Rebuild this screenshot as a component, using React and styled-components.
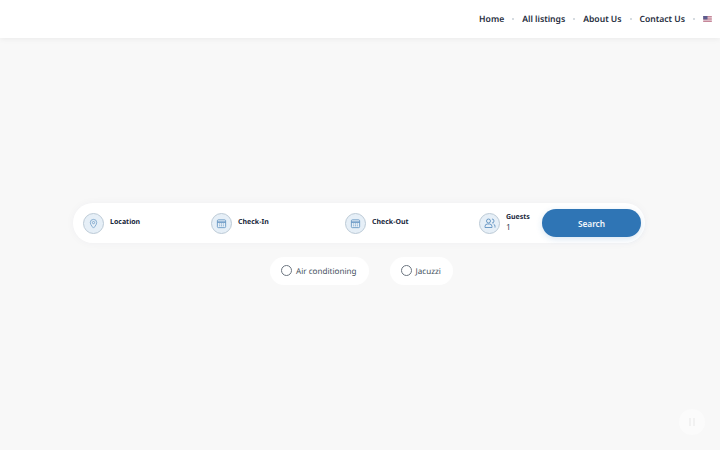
import React from 'react'
import styled, { createGlobalStyle } from 'styled-components'

const GlobalStyle = createGlobalStyle`
  html, body {
    margin: 0;
    height: 100%;
    background: #f8f8f8;
    font-family: "Noto Sans", sans-serif;
    color: #1c2b3a;
    text-rendering: geometricPrecision;
  }
  #root { height: 100%; }
  * { box-sizing: border-box; }
`

const Page = styled.div`
  width: 720px;
  height: 450px;
  overflow: hidden;
  display: flex;
  flex-direction: column;
`

const Header = styled.header`
  height: 38px;
  flex: none;
  padding: 0 8px 1px 0;
  background: #fff;
  box-shadow: 0 1px 6px rgba(0, 0, 0, 0.06);
  display: flex;
  align-items: center;
  justify-content: flex-end;
`

const NavLink = styled.a`
  font-size: 8.6px;
  font-weight: 600;
  color: #1f2d3d;
  white-space: nowrap;
`

const Dot = styled.span`
  width: 2px;
  height: 2px;
  margin: 0 8px;
  border-radius: 50%;
  background: #c9d0d7;
`

const Main = styled.main`
  padding: 165px 0 0 73px;
`

const SearchBar = styled.div`
  width: 572px;
  height: 40px;
  padding: 0 4px 0 10px;
  background: #fff;
  border-radius: 20px;
  box-shadow: 0 0 8px rgba(40, 60, 90, 0.04);
  display: flex;
  align-items: center;
`

const Field = styled.div`
  width: ${(p) => p.$width}px;
  flex: none;
  display: flex;
  align-items: center;
  gap: 6px;
`

const IconCircle = styled.span`
  width: 21px;
  height: 21px;
  flex: none;
  border-radius: 50%;
  background: #e6eff7;
  border: 1px solid #bccad6;
  color: #3f7cb4;
  display: flex;
  align-items: center;
  justify-content: center;
`

const FieldText = styled.div`
  display: flex;
  flex-direction: column;
  line-height: 10px;
`

const FieldLabel = styled.span`
  font-size: 7px;
  font-weight: 700;
  color: #17263a;
`

const FieldValue = styled.span`
  font-size: 8.5px;
  color: #3c4a58;
`

const SearchButton = styled.button`
  width: 99px;
  height: 28px;
  flex: none;
  margin-left: auto;
  border: none;
  border-radius: 14px;
  background: #2f75b5;
  color: #f2f7fb;
  font: 600 8.3px "Noto Sans", sans-serif;
  box-shadow: 0 2px 6px rgba(47, 117, 181, 0.18);
`

const Amenities = styled.div`
  margin: 14px 0 0 197px;
  display: flex;
  gap: 21px;
`

const Amenity = styled.label`
  height: 28px;
  padding: 0 12px 0 11px;
  background: #fff;
  border-radius: 14px;
  display: flex;
  align-items: center;
  gap: 4px;
  font-size: 8.1px;
  color: #465361;
`

const Radio = styled.span`
  width: 11px;
  height: 11px;
  margin-top: -1px;
  border-radius: 50%;
  border: 1px solid #6b7580;
  background: #fff;
`

const FloatingButton = styled.button`
  position: fixed;
  right: 15px;
  bottom: 15px;
  width: 26px;
  height: 26px;
  padding: 0;
  border: none;
  border-radius: 50%;
  background: #fbfbfb;
  display: flex;
  align-items: center;
  justify-content: center;
  gap: 2px;
`

const Bar = styled.span`
  width: 2px;
  height: 8px;
  background: #f1f1f1;
`

const FlagSlot = styled.span`
  display: flex;
`

const Flag = () => (
  <svg width="9" height="6" viewBox="0 0 10 7">
    <rect width="10" height="7" fill="#e9d5dc" />
    <rect width="10" height="1" fill="#c07a8e" />
    <rect y="2" width="10" height="1" fill="#c07a8e" />
    <rect y="4" width="10" height="1" fill="#c07a8e" />
    <rect y="6" width="10" height="1" fill="#c07a8e" />
    <rect width="5" height="4" fill="#5c5c8e" />
  </svg>
)

const PinIcon = () => (
  <svg width="11" height="11" viewBox="0 0 24 24" fill="none" stroke="currentColor" strokeWidth="1.6" opacity="0.75">
    <path d="M12 22s7-7 7-12a7 7 0 1 0-14 0c0 5 7 12 7 12z" />
    <circle cx="12" cy="10" r="2.5" />
  </svg>
)

const CalendarIcon = () => (
  <svg width="11" height="11" viewBox="0 0 24 24" fill="none" stroke="currentColor" strokeWidth="1.8" opacity="0.8">
    <rect x="3" y="4" width="18" height="17" rx="2" />
    <path d="M3 9h18" strokeWidth="3" />
    <path d="M7 13h2M11 13h2M15 13h2M7 17h2M11 17h2M15 17h2" />
  </svg>
)

const GuestsIcon = () => (
  <svg width="12" height="12" viewBox="0 0 24 24" fill="none" stroke="currentColor" strokeWidth="1.8" opacity="0.8">
    <circle cx="9" cy="8" r="4" />
    <path d="M2 21v-2a5 5 0 0 1 5-5h4a5 5 0 0 1 5 5v2z" />
    <path d="M16 4a4 4 0 0 1 0 8M19 14a5 5 0 0 1 3 5v2" />
  </svg>
)

const links = ['Home', 'All listings', 'About Us', 'Contact Us']

export default function App() {
  return (
    <Page>
      <GlobalStyle />
      <Header>
        {links.map((link) => (
          <React.Fragment key={link}>
            <NavLink>{link}</NavLink>
            <Dot />
          </React.Fragment>
        ))}
        <FlagSlot><Flag /></FlagSlot>
      </Header>
      <Main>
        <SearchBar>
          <Field $width={128}>
            <IconCircle><PinIcon /></IconCircle>
            <FieldText><FieldLabel>Location</FieldLabel></FieldText>
          </Field>
          <Field $width={134}>
            <IconCircle><CalendarIcon /></IconCircle>
            <FieldText><FieldLabel>Check-In</FieldLabel></FieldText>
          </Field>
          <Field $width={134}>
            <IconCircle><CalendarIcon /></IconCircle>
            <FieldText><FieldLabel>Check-Out</FieldLabel></FieldText>
          </Field>
          <Field $width={60}>
            <IconCircle><GuestsIcon /></IconCircle>
            <FieldText>
              <FieldLabel>Guests</FieldLabel>
              <FieldValue>1</FieldValue>
            </FieldText>
          </Field>
          <SearchButton>Search</SearchButton>
        </SearchBar>
        <Amenities>
          <Amenity><Radio />Air conditioning</Amenity>
          <Amenity><Radio />Jacuzzi</Amenity>
        </Amenities>
      </Main>
      <FloatingButton aria-label="pause"><Bar /><Bar /></FloatingButton>
    </Page>
  )
}
